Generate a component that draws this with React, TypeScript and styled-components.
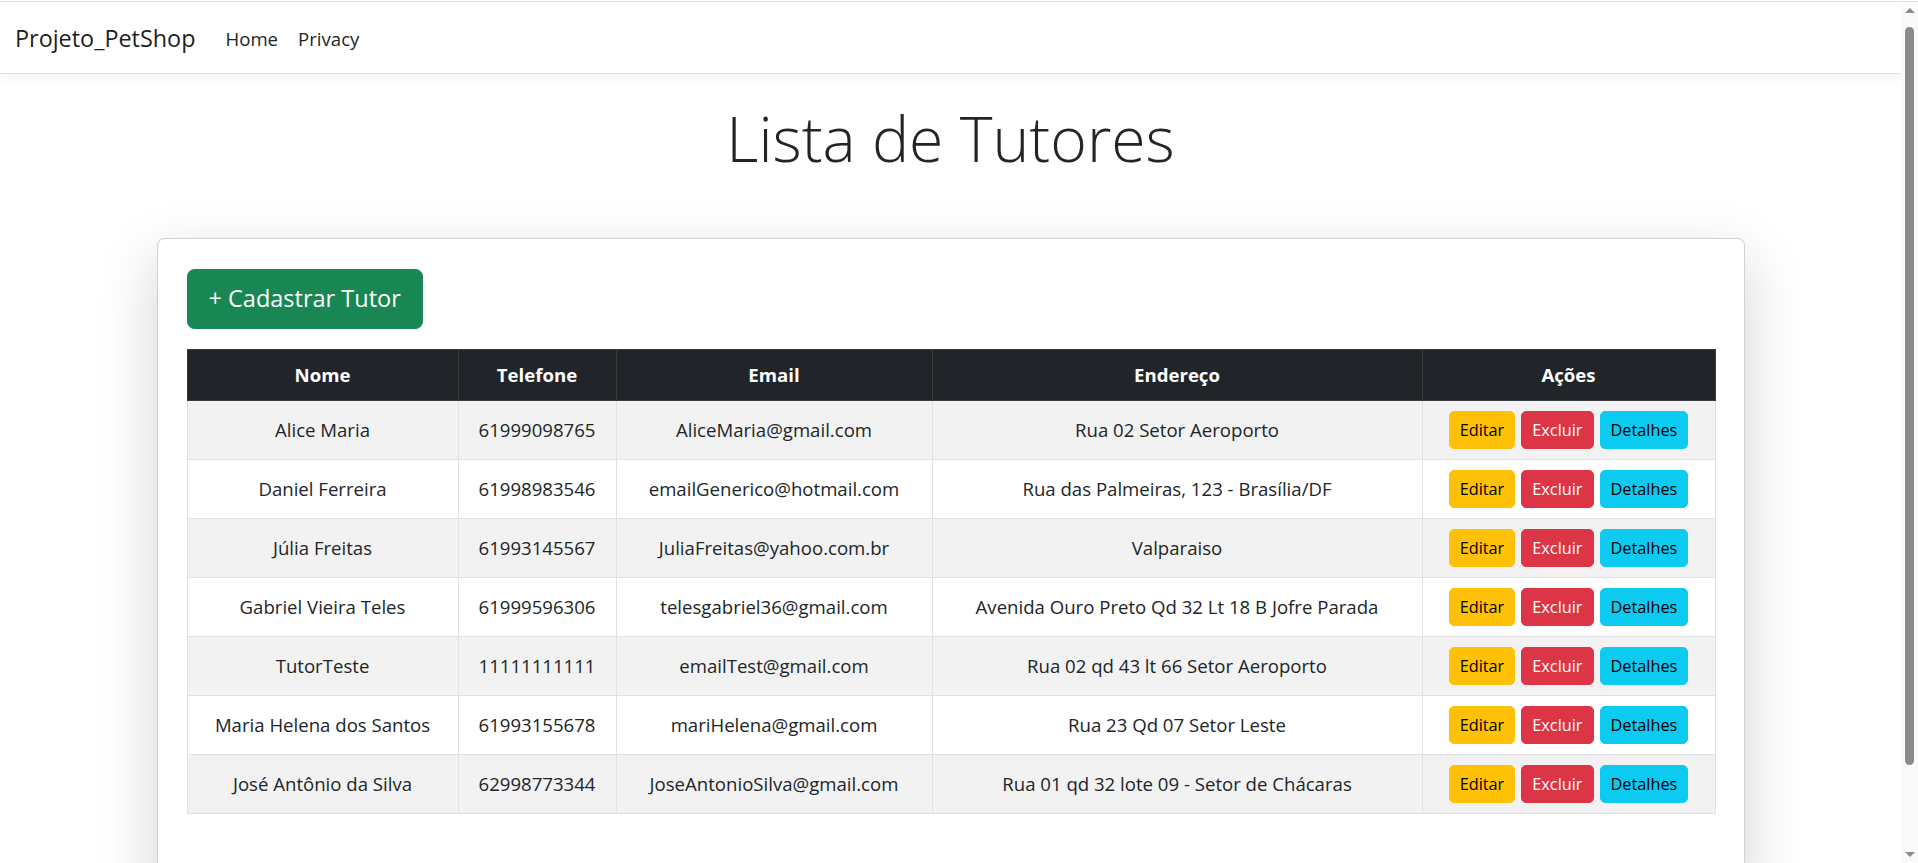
import styled, { createGlobalStyle } from "styled-components";

const GlobalStyle = createGlobalStyle`
	* {
		box-sizing: border-box;
	}

	html,
	body {
		margin: 0;
		padding: 0;
		height: 100%;
		overflow: hidden;
	}

	body {
		font-family: "Segoe UI", "Open Sans", "Noto Sans", sans-serif;
		font-size: 18.6px;
		line-height: 30px;
		color: #212529;
		background: #fff;
	}
`;

type Tutor = {
	nome: string;
	telefone: string;
	email: string;
	endereco: string;
};

const tutores: Tutor[] = [
	{ nome: "Alice Maria", telefone: "61999098765", email: "AliceMaria@gmail.com", endereco: "Rua 02 Setor Aeroporto" },
	{ nome: "Daniel Ferreira", telefone: "61998983546", email: "emailGenerico@hotmail.com", endereco: "Rua das Palmeiras, 123 - Brasília/DF" },
	{ nome: "Júlia Freitas", telefone: "61993145567", email: "JuliaFreitas@yahoo.com.br", endereco: "Valparaiso" },
	{ nome: "Gabriel Vieira Teles", telefone: "61999596306", email: "telesgabriel36@gmail.com", endereco: "Avenida Ouro Preto Qd 32 Lt 18 B Jofre Parada" },
	{ nome: "TutorTeste", telefone: "11111111111", email: "emailTest@gmail.com", endereco: "Rua 02 qd 43 lt 66 Setor Aeroporto" },
	{ nome: "Maria Helena dos Santos", telefone: "61993155678", email: "mariHelena@gmail.com", endereco: "Rua 23 Qd 07 Setor Leste" },
	{ nome: "José Antônio da Silva", telefone: "62998773344", email: "JoseAntonioSilva@gmail.com", endereco: "Rua 01 qd 32 lote 09 - Setor de Chácaras" },
];

// column widths measured from the page (px)
const colunas = [271, 158, 316, 490, 293];

const App = () => {
	return (
		<>
			<GlobalStyle />
			<Frame>
				<Page>
					<Navbar>
						<Brand>Projeto_PetShop</Brand>
						<NavLinks>
							<NavLink>Home</NavLink>
							<NavLink>Privacy</NavLink>
						</NavLinks>
					</Navbar>

					<Main>
						<Title>Lista de Tutores</Title>

						<Card>
							<AddButton>+ Cadastrar Tutor</AddButton>

							<Table>
								<colgroup>
									{colunas.map((w, i) => (
										<col key={i} style={{ width: w }} />
									))}
								</colgroup>
								<thead>
									<tr>
										<Th>Nome</Th>
										<Th>Telefone</Th>
										<Th>Email</Th>
										<Th>Endereço</Th>
										<Th>Ações</Th>
									</tr>
								</thead>
								<tbody>
									{tutores.map((t, i) => (
										<Row key={t.email} $striped={i % 2 === 0}>
											<Td>{t.nome}</Td>
											<Td>{t.telefone}</Td>
											<Td>{t.email}</Td>
											<Td>{t.endereco}</Td>
											<Td>
												<Actions>
													<ActionButton $variant="warning">Editar</ActionButton>
													<ActionButton $variant="danger">Excluir</ActionButton>
													<ActionButton $variant="info">Detalhes</ActionButton>
												</Actions>
											</Td>
										</Row>
									))}
								</tbody>
							</Table>
						</Card>
					</Main>
				</Page>

				<ScrollBar>
					<ScrollArrow $dir="up" />
					<ScrollTrack>
						<ScrollThumb />
					</ScrollTrack>
					<ScrollArrow $dir="down" />
				</ScrollBar>
			</Frame>
		</>
	);
};

const Frame = styled.div`
	display: flex;
	height: calc(100vh - 1px);
	margin-top: 1px;
	border-top: 1px solid #e3e3ee;
`;

const Page = styled.div`
	flex: 1;
	min-width: 0;
	overflow: hidden;
`;

const Navbar = styled.nav`
	display: flex;
	align-items: center;
	height: 72px;
	padding: 2px 15px 0;
	border-bottom: 1px solid #dee2e6;
	box-shadow: 0 4px 12px rgba(0, 0, 0, 0.05);
`;

const Brand = styled.a`
	font-size: 23.4px;
	line-height: 37.5px;
	color: rgba(0, 0, 0, 0.9);
	margin-right: 20px;
	white-space: nowrap;
`;

const NavLinks = styled.div`
	display: flex;
`;

const NavLink = styled.a`
	padding: 10px;
	font-size: 18.6px;
	color: #212529;
`;

const Main = styled.main`
	padding-top: 22px;
`;

const Title = styled.h1`
	margin: 0 0 58px;
	text-align: center;
	font-size: 62.5px;
	font-weight: 300;
	line-height: 84px;
	color: #212529;
`;

const Card = styled.div`
	width: 1588px;
	margin: 0 auto;
	padding: 30px 29px 80px;
	background: #fff;
	border: 1px solid rgba(0, 0, 0, 0.175);
	border-radius: 7.5px;
	box-shadow: 0 20px 60px rgba(0, 0, 0, 0.175);
`;

const AddButton = styled.button`
	display: block;
	height: 60px;
	margin-bottom: 20px;
	padding: 0 21px;
	font-family: inherit;
	font-size: 23.5px;
	line-height: 37.5px;
	color: #fff;
	background: #198754;
	border: 1px solid #198754;
	border-radius: 7.5px;
`;

const Table = styled.table`
	width: 100%;
	table-layout: fixed;
	border-collapse: collapse;
	text-align: center;
`;

const Th = styled.th`
	padding: 10px;
	font-weight: 700;
	line-height: 30px;
	color: #fff;
	background: #212529;
	border: 1px solid #373b3e;
`;

const Row = styled.tr<{ $striped: boolean }>`
	background: ${({ $striped }) => ($striped ? "#f2f2f2" : "#fff")};
`;

const Td = styled.td`
	height: 59px;
	padding: 0 10px;
	vertical-align: middle;
	line-height: 30px;
	border: 1px solid #dee2e6;
	white-space: nowrap;
`;

const Actions = styled.div`
	display: flex;
	justify-content: center;
	gap: 6px;
`;

const variantes = {
	warning: { bg: "#ffc107", fg: "#000" },
	danger: { bg: "#dc3545", fg: "#fff" },
	info: { bg: "#0dcaf0", fg: "#000" },
};

const ActionButton = styled.button<{ $variant: keyof typeof variantes }>`
	height: 38px;
	padding: 0 10px;
	font-family: inherit;
	font-size: 16.3px;
	line-height: 26px;
	color: ${({ $variant }) => variantes[$variant].fg};
	background: ${({ $variant }) => variantes[$variant].bg};
	border: 1px solid ${({ $variant }) => variantes[$variant].bg};
	border-radius: 5px;
`;

const ScrollBar = styled.div`
	display: flex;
	flex-direction: column;
	width: 17px;
	flex-shrink: 0;
	background: #fafafa;
`;

const ScrollArrow = styled.div<{ $dir: "up" | "down" }>`
	display: flex;
	align-items: center;
	justify-content: center;
	height: 17px;

	&::before {
		content: "";
		width: 0;
		height: 0;
		border-left: 5px solid transparent;
		border-right: 5px solid transparent;
		${({ $dir }) =>
			$dir === "up"
				? "border-bottom: 5px solid #8a8a8a;"
				: "border-top: 5px solid #8a8a8a;"}
	}
`;

const ScrollTrack = styled.div`
	flex: 1;
	display: flex;
	justify-content: center;
	padding-top: 8px;
`;

const ScrollThumb = styled.div`
	width: 9px;
	height: 738px;
	background: #8a8a8a;
	border-radius: 5px;
`;

export default App;
